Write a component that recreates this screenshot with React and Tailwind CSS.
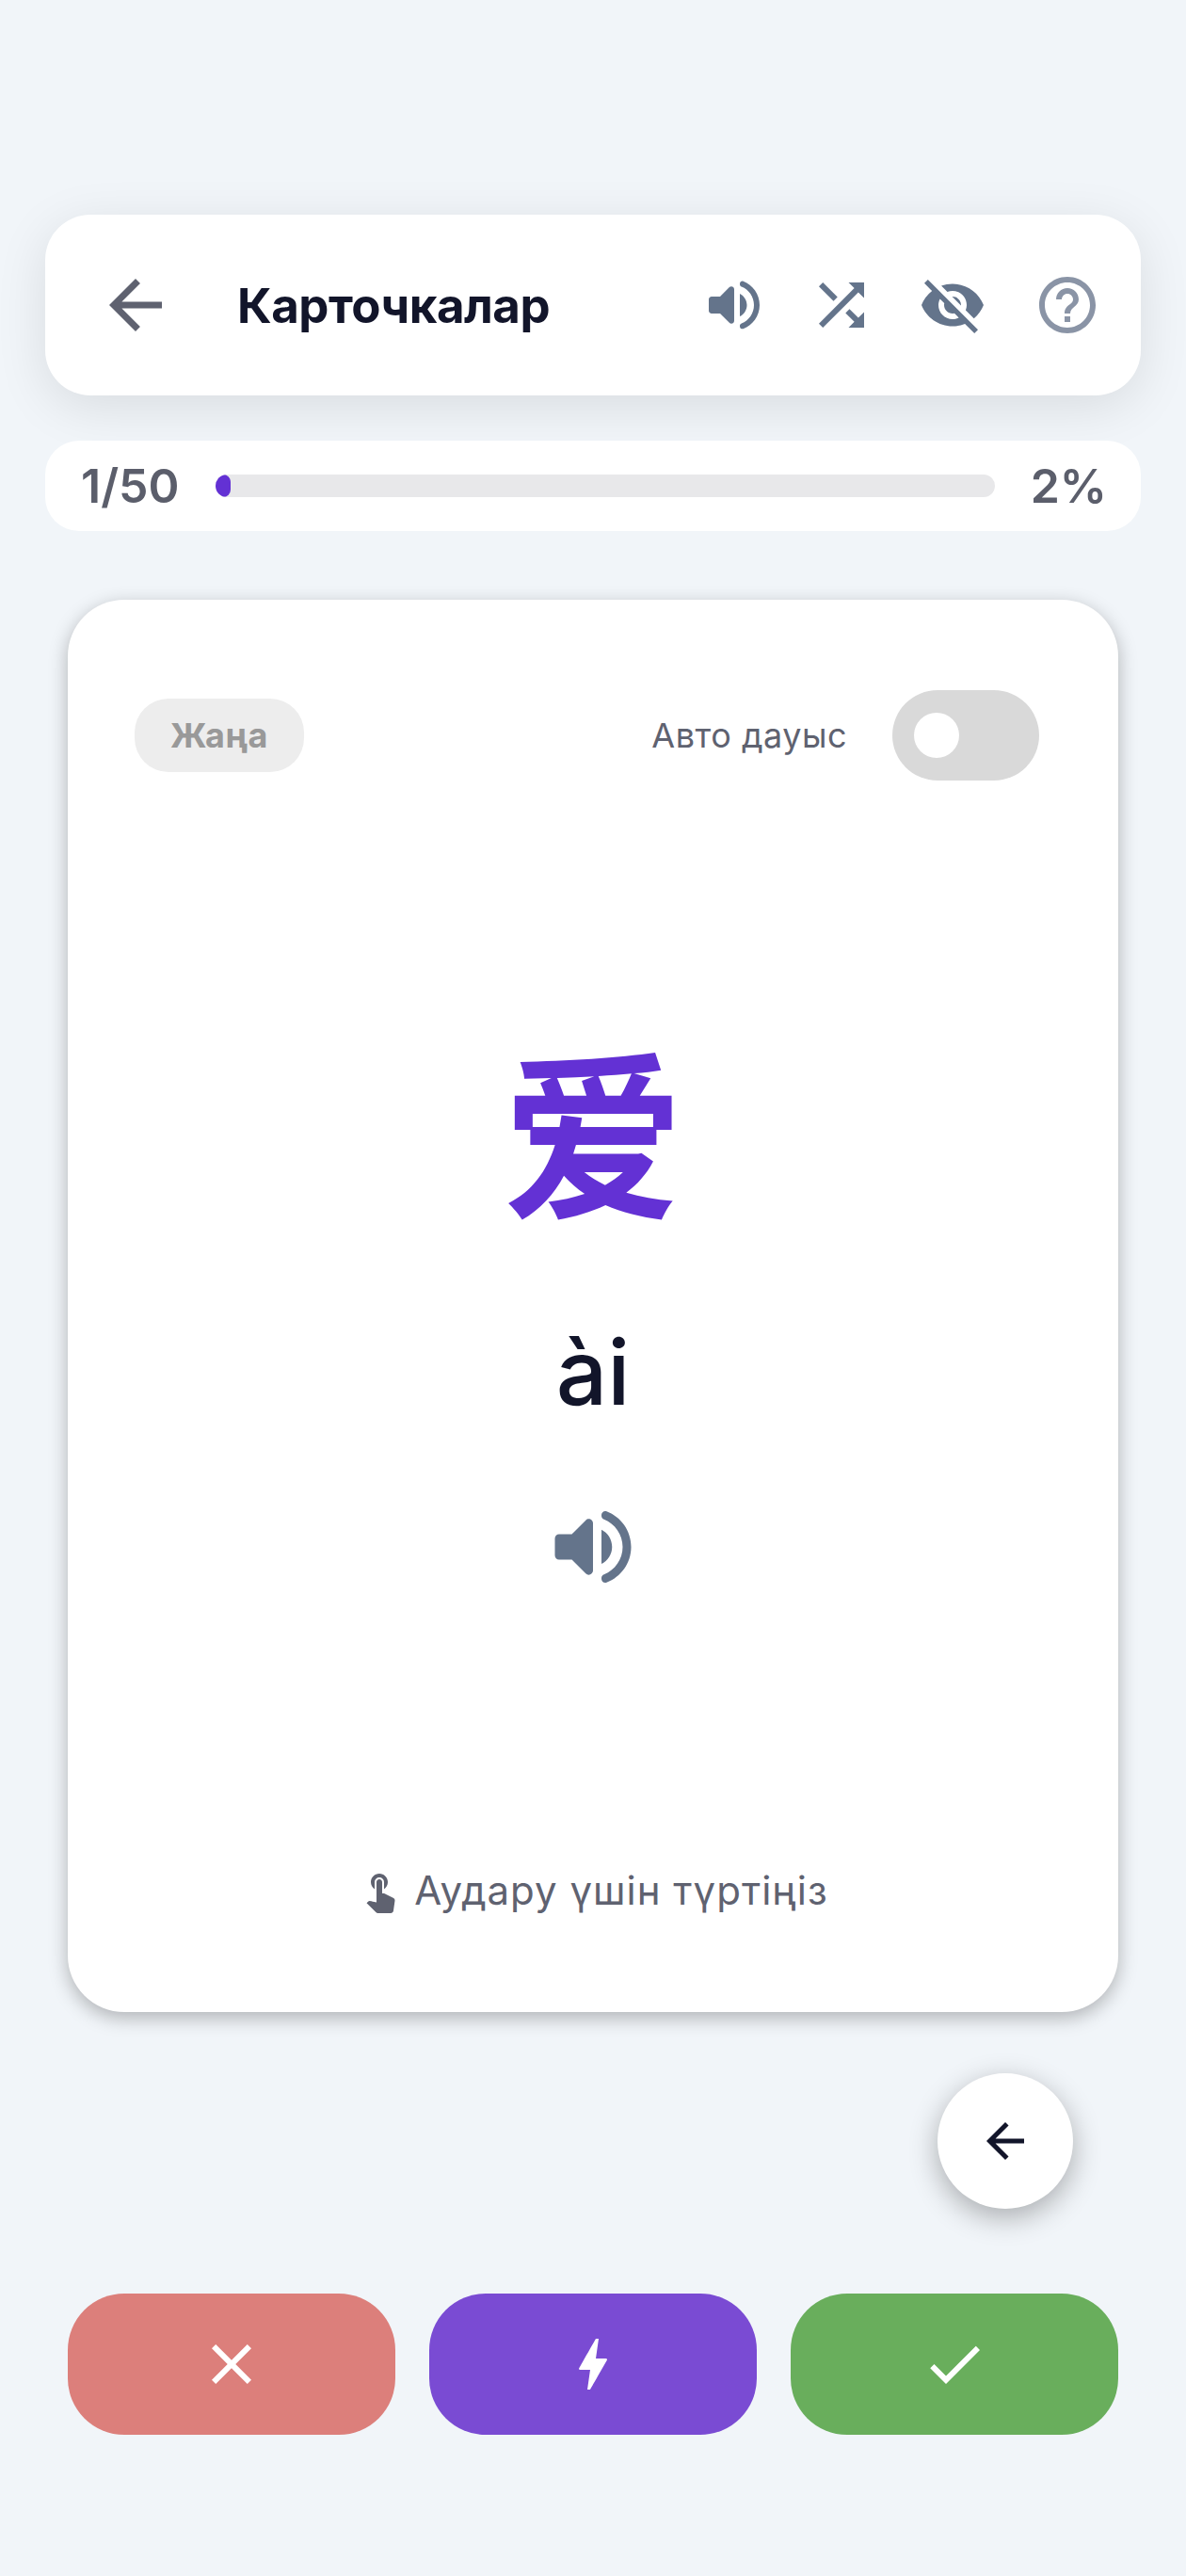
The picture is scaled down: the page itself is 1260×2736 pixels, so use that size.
import { MdArrowBack, MdShuffle, MdVisibilityOff, MdHelpOutline, MdTouchApp, MdClose, MdCheck, MdBolt } from 'react-icons/md';

function VolumeIcon({ className }) {
  return (
    <svg viewBox="0 0 24 24" fill="currentColor" className={className}>
      <path d="M3 10v4c0 .55.45 1 1 1h3l3.29 3.29c.63.63 1.71.18 1.71-.71V6.41c0-.89-1.08-1.34-1.71-.71L7 9H4c-.55 0-1 .45-1 1zm13.5 2c0-1.77-1.02-3.29-2.5-4.03v8.05c1.48-.73 2.5-2.25 2.5-4.02zM14 4.45v.2c0 .38.25.71.6.85C17.18 6.53 19 9.06 19 12s-1.82 5.47-4.4 6.5c-.36.14-.6.47-.6.85v.2c0 .63.63 1.07 1.21.85C18.6 19.11 21 15.84 21 12s-2.4-7.11-5.79-8.4c-.58-.23-1.21.22-1.21.85z" />
    </svg>
  );
}

export default function App() {
  return (
    <div className="min-h-[2736px] bg-[#f1f5f9] pt-[228px] px-12 font-['Inter','Noto_Sans_CJK_SC',sans-serif]">
      {/* Header */}
      <div className="h-[192px] bg-white rounded-[48px] flex items-center pl-[54px] pr-[42px] shadow-[0_12px_54px_rgba(0,0,0,0.1)]">
        <MdArrowBack className="w-[84px] h-[84px] text-[#5f6270] shrink-0" />
        <h1 className="ml-[66px] pt-[2px] text-[51px] font-bold text-[#12152a] tracking-[-0.5px] flex-1">Карточкалар</h1>
        <div className="flex items-center">
          <VolumeIcon className="w-[72px] h-[72px] text-[#64748b]" />
          <MdShuffle className="ml-[42px] w-[72px] h-[72px] text-[#64748b]" />
          <MdVisibilityOff className="ml-[46px] w-[72px] h-[72px] text-[#64748b]" />
          <MdHelpOutline className="ml-[50px] w-[72px] h-[72px] text-[#8a94a6]" />
        </div>
      </div>

      {/* Progress */}
      <div className="mt-12 h-24 bg-white rounded-[36px] flex items-center pl-[38px] pr-[36px] gap-[38px]">
        <span className="text-[50px] font-semibold text-[#5b5e6b]">1/50</span>
        <div className="flex-1 h-6 bg-[#e8e8ea] rounded-full overflow-hidden">
          <div className="h-full bg-[#6331d4] rounded-full" style={{ width: '2%' }} />
        </div>
        <span className="text-[50px] font-semibold text-[#5b5e6b]">2%</span>
      </div>

      {/* Card */}
      <div className="mx-6 mt-[73px] h-[1500px] bg-white rounded-[60px] shadow-[0_6px_20px_rgba(0,0,0,0.28)] flex flex-col items-center pt-24">
        <div className="w-full flex items-center justify-between pl-[71px] pr-[84px]">
          <span className="h-[78px] w-[180px] rounded-[36px] bg-[#ededed] text-[#999999] text-[36px] tracking-[0.5px] font-bold flex items-center justify-center">Жаңа</span>
          <div className="flex items-center gap-[48px]">
            <span className="text-[36px] text-[#5f6270] tracking-[0.5px]">Авто дауыс</span>
            <div className="w-[156px] h-24 bg-[#d9d9d9] rounded-full flex items-center pl-[23px]">
              <div className="w-12 h-12 bg-white rounded-full" />
            </div>
          </div>
        </div>
        <div className="mt-[265px] text-[192px] leading-[230px] font-bold text-[#6331d4]">爱</div>
        <div className="mt-[75px] text-[96px] leading-[116px] font-medium text-[#12152a]">ài</div>
        <VolumeIcon className="mt-[74px] w-[108px] h-[108px] text-[#64748b]" />
        <div className="mt-auto mb-[98px] flex items-center gap-3 text-[42px] text-[#5f6270] tracking-[1px]">
          <MdTouchApp className="w-[48px] h-[48px]" />
          <span>Аудару үшін түртіңіз</span>
        </div>
      </div>

      {/* Back */}
      <div className="mt-[65px] flex justify-end pr-[72px]">
        <button className="w-[144px] h-[144px] rounded-full bg-white flex items-center justify-center shadow-[0_9px_30px_rgba(0,0,0,0.3)]">
          <MdArrowBack className="w-[60px] h-[60px] text-[#12152a]" />
        </button>
      </div>

      {/* Actions */}
      <div className="mt-[90px] mx-6 grid grid-cols-3 gap-9">
        <button className="h-[150px] rounded-[60px] bg-[#dc7f7b] flex items-center justify-center text-white">
          <MdClose className="w-[72px] h-[72px]" />
        </button>
        <button className="h-[150px] rounded-[60px] bg-[#7a4bd3] flex items-center justify-center text-white">
          <MdBolt className="w-[72px] h-[72px]" />
        </button>
        <button className="h-[150px] rounded-[60px] bg-[#69ae5c] flex items-center justify-center text-white">
          <MdCheck className="w-[72px] h-[72px]" />
        </button>
      </div>
    </div>
  );
}
